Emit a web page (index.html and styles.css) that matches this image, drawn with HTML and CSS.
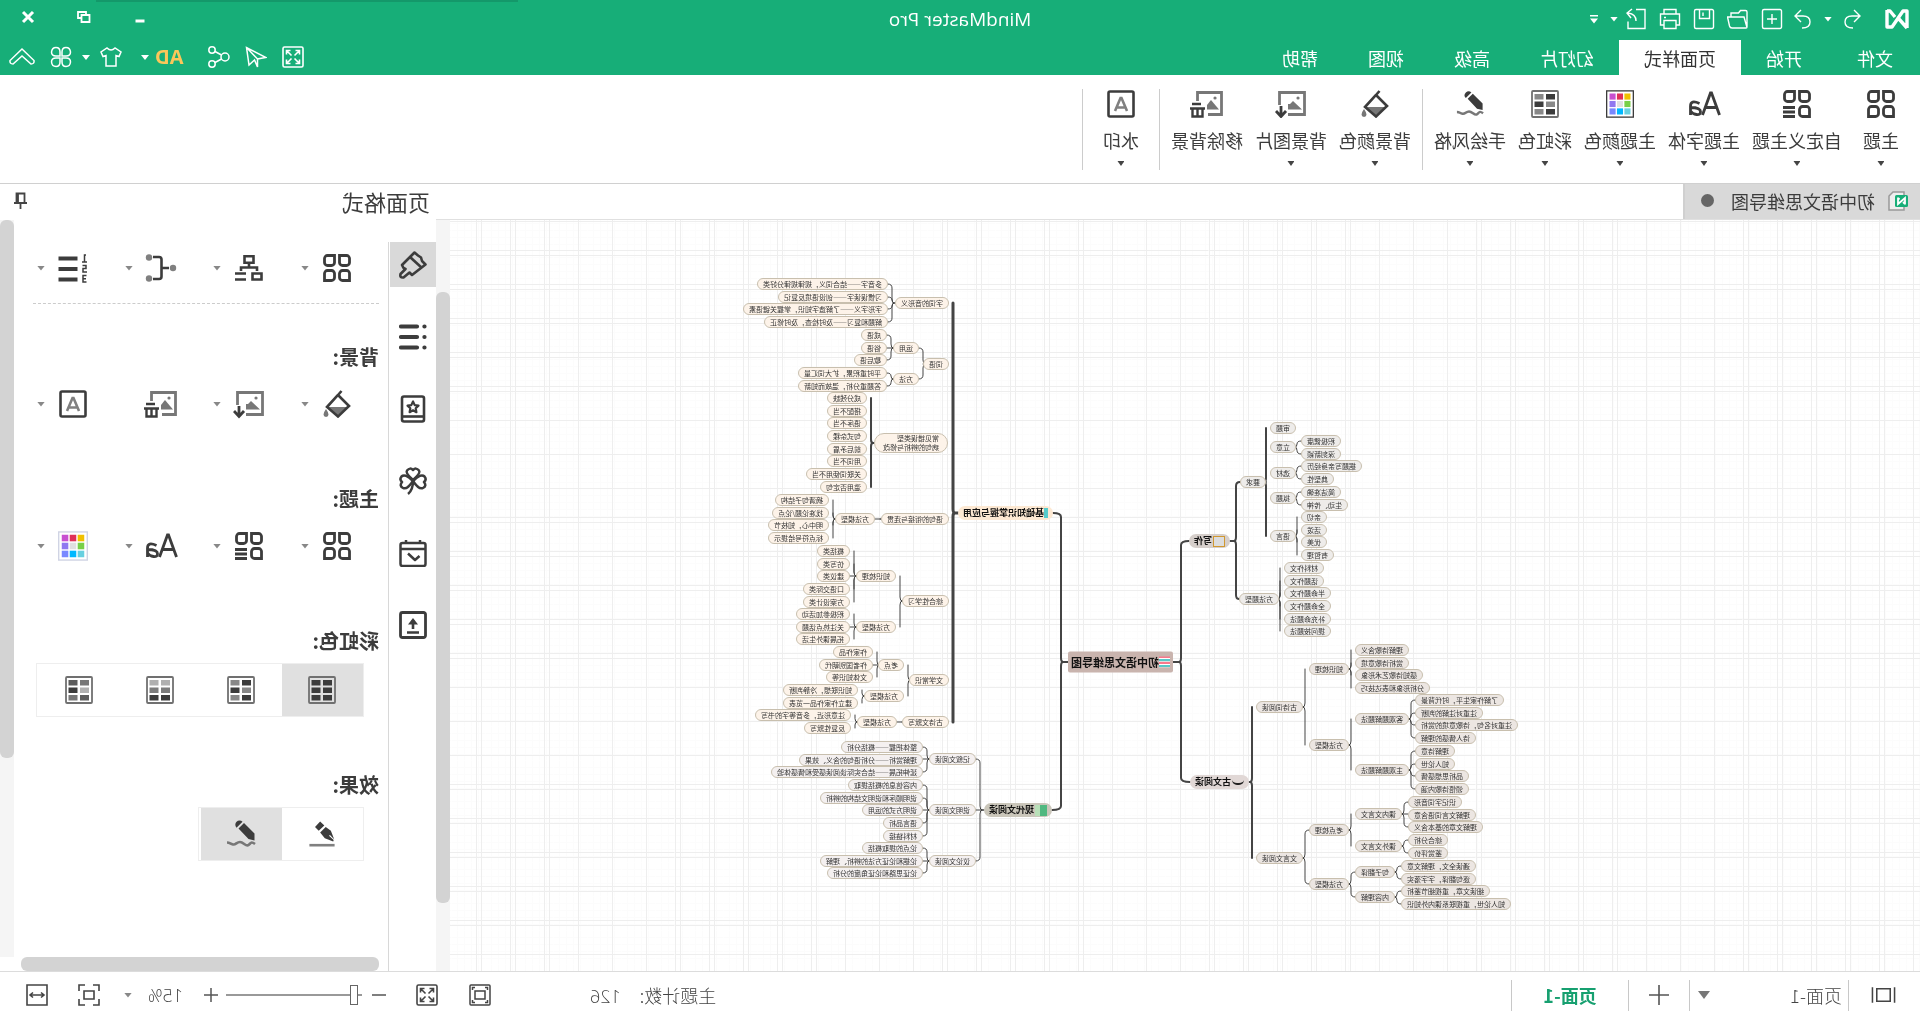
FILE: index.html
```html
<!DOCTYPE html>
<html lang="zh-CN">
<head>
<meta charset="utf-8">
<title>MindMaster Pro</title>
<link rel="stylesheet" href="styles.css">
</head>
<body>
<svg class="sprite" aria-hidden="true">
  <defs>
    <symbol id="theme" viewBox="0 0 28 28"><g fill="none" stroke="currentColor" stroke-width="2.8"><path d="M1.5 4.5a3 3 0 0 1 3-3h7v7a3 3 0 0 1-3 3h-4a3 3 0 0 1-3-3z"/><path d="M16.500 1.500h7a3 3 0 0 1 3 3v4a3 3 0 0 1-3 3h-4a3 3 0 0 1-3-3z"/><path d="M4.500 16.500h4a3 3 0 0 1 3 3v4a3 3 0 0 1-3 3h-7v-7a3 3 0 0 1 3-3z"/><path d="M19.500 16.500h4a3 3 0 0 1 3 3v7h-7a3 3 0 0 1-3-3v-4a3 3 0 0 1 3-3z"/></g></symbol>
    <symbol id="custom" viewBox="0 0 28 28"><g fill="none" stroke="currentColor" stroke-width="2.8"><path d="M1.500 4.500a3 3 0 0 1 3-3h7v7a3 3 0 0 1-3 3h-4a3 3 0 0 1-3-3z"/><path d="M16.500 1.500h7a3 3 0 0 1 3 3v4a3 3 0 0 1-3 3h-4a3 3 0 0 1-3-3z"/><path d="M4.500 16.500h4a3 3 0 0 1 3 3v4a3 3 0 0 1-3 3h-7v-7a3 3 0 0 1 3-3z"/><path d="M16 17.500h12M16 22h12M16 26.500h12"/></g></symbol>
    <symbol id="font" viewBox="0 0 34 28"><g fill="none" stroke="currentColor" stroke-width="2.800"><path d="M1.500 25 9.500 3h1l8 22M4.500 17.500h11"/><path d="M21.500 13.500q9-4 9 2.500v9M30.500 17.500q-10 0-10 4.200 0 3.300 4 2.800 4-.5 6-3.500"/></g></symbol>
    <symbol id="palette" viewBox="0 0 32 32"><rect x=".75" y="1" width="30.500" height="30" fill="#fff" stroke="currentColor" stroke-width="1.500"/><path fill="#f0c000" d="M4 4h7v7H4z"/><path fill="#e03058" d="M12.500 4h7v7h-7z"/><path fill="#c850d0" d="M21 4h7v7h-7z"/><path fill="#78d048" d="M4 12.500h7v7H4z"/><path fill="#e0e0e0" d="M12.500 12.500h7v7h-7z"/><path fill="#9078f0" d="M21 12.500h7v7h-7z"/><path fill="#68d0e0" d="M4 21h7v7H4z"/><path fill="#00b8ff" d="M12.500 21h7v7h-7z"/><path fill="#7888ff" d="M21 21h7v7h-7z"/></symbol>
    <symbol id="rb-all" viewBox="0 0 28 28"><rect x="1" y="1" width="26" height="26" rx="1" fill="none" stroke="#707070" stroke-width="1.800"/><g fill="#3c3c3c"><path d="M4 4h9v5.500H4zM15.500 4h9v5.500h-9zM4 11.500h9V17H4zM15.500 11.500h9V17h-9zM4 19h9v5.500H4zM15.500 19h9v5.500h-9z"/></g></symbol>
    <symbol id="rb-mix" viewBox="0 0 28 28"><rect x="1" y="1" width="26" height="26" rx="1" fill="#fff" stroke="#707070" stroke-width="1.800"/><path fill="#3c3c3c" d="M4 4h9v5.500H4zM15.500 11.500h9V17h-9zM4 19h9v5.500H4z"/><path fill="#888" d="M15.500 4h9v5.500h-9zM4 11.500h9V17H4zM15.500 19h9v5.500h-9z"/></symbol>
    <symbol id="rb-rows" viewBox="0 0 28 28"><rect x="1" y="1" width="26" height="26" rx="1" fill="#fff" stroke="#707070" stroke-width="1.800"/><path fill="#b0b0b0" d="M4 4h9v5.500H4zM15.500 4h9v5.500h-9z"/><path fill="#7c7c7c" d="M4 11.500h9V17H4zM15.500 11.500h9V17h-9z"/><path fill="#3c3c3c" d="M4 19h9v5.500H4zM15.500 19h9v5.500h-9z"/></symbol>
    <symbol id="rb-rand" viewBox="0 0 28 28"><rect x="1" y="1" width="26" height="26" rx="1" fill="#fff" stroke="#707070" stroke-width="1.800"/><path fill="#777" d="M4 4h9v5.500H4zM15.500 19h9v5.500h-9z"/><path fill="#5c5c5c" d="M15.500 4h9v5.500h-9zM4 19h9v5.500H4z"/><path fill="#b0b0b0" d="M4 11.500h9V17H4z"/><path fill="#3c3c3c" d="M15.500 11.500h9V17h-9z"/></symbol>
    <symbol id="pencil" viewBox="0 0 30 30"><path fill="currentColor" d="M1.500 14.500 12 4l5.500 5.500L7.500 20l-6 1.500zM13.500 2.800a4.200 4.200 0 0 1 6 5.900z"/><path d="M1 25c4-3 4-1 6.500 1s5-3 8.500-3 4 3 7 2.500 3-2 6-2" fill="none" stroke="#777" stroke-width="2.600"/></symbol>
    <symbol id="pen" viewBox="0 0 30 30"><path fill="currentColor" d="M17 1.500 22.500 7.500 18.500 11.500 12.500 6zM11 7.500 17 13.500 12 19.500 3 23 2.500 21.500 7.500 17 6.500 16 2 20.500 5.500 11.500z"/><path d="M1.500 27h27" stroke="#808080" stroke-width="2.800"/></symbol>
    <symbol id="bucket" viewBox="0 0 28 28"><path fill="#777" d="M4 17h19l-9 9zM25 19q5 7 0 8-5-1 0-8z"/><path d="M9.500 1 13 5l11 12-11 9.500L2 16 13 5" fill="none" stroke="currentColor" stroke-width="2.600"/></symbol>
    <symbol id="bgimg" viewBox="0 0 32 28"><path d="M19 24.500H2.500v-22h25V15" fill="none" stroke="#777" stroke-width="2.800"/><path fill="#777" d="M5 19.500 14 11l3 3 2 0v5.500z"/><circle cx="9" cy="8" r="1.600" fill="#777"/><path d="M26 16v10M21 21l5 5.500 5-5.500" fill="none" stroke="currentColor" stroke-width="2.800"/></symbol>
    <symbol id="rmimg" viewBox="0 0 34 28"><path d="M16 24.500H2.500v-22h24V11" fill="none" stroke="#777" stroke-width="2.800"/><path fill="#777" d="M5 19.500 13 10l4 5v4.500z"/><circle cx="9" cy="8" r="1.600" fill="#777"/><path d="M23 14h9M19 18.500h15M21.500 19v7.500h10V19M26.500 19v7" fill="none" stroke="currentColor" stroke-width="2.400"/></symbol>
    <symbol id="mark" viewBox="0 0 28 28"><rect x="1.500" y="1.500" width="25" height="25" rx="1.500" fill="none" stroke="currentColor" stroke-width="2.600"/><path d="M8 21 13.500 8h1L20 21M9.500 17.500h9" fill="none" stroke="#808080" stroke-width="2.600"/></symbol>
    <symbol id="layout" viewBox="0 0 28 28"><g fill="none" stroke="currentColor" stroke-width="2.600"><path d="M9.500 2.300h9v6.400h-9zM14 9v4M6 17v-3.500h16V17M1.500 19.500h9v6h-9zM17 19.500h11M17 25.500h11"/></g></symbol>
    <symbol id="branch" viewBox="0 0 32 28"><path d="M8 14h7M24 3h-6q-2.500 0-2.500 2.500v17q0 2.500 2.500 2.500h6" fill="none" stroke="currentColor" stroke-width="2.600"/><g fill="#808080"><circle cx="4" cy="14" r="3.200"/><circle cx="28" cy="3.500" r="3.200"/><circle cx="28" cy="24.500" r="3.200"/></g></symbol>
    <symbol id="number" viewBox="0 0 30 30"><path d="M10.500 5.500h19M10.500 16h19M10.500 26.500h19" stroke="currentColor" stroke-width="4.200"/><path d="M2 2h1.500v7M1 9h5M5.500 12.500H2v3h3v3.500H1M1.500 22.500H5V29H1.500M2 25.800h3" fill="none" stroke="currentColor" stroke-width="1.500"/></symbol>
    <symbol id="brush" viewBox="0 0 28 28"><g fill="none" stroke="currentColor" stroke-width="2.600" stroke-linejoin="round"><path d="M1.500 13.500 5 10l1-3.500 3-2 3.500-3L25 14l-1.500 3-2 1 5 5q1 4-3 3.500l-6-5-2.500 2.500z"/><path d="M5 17 17 6"/></g></symbol>
    <symbol id="list" viewBox="0 0 28 28"><g stroke="currentColor" stroke-width="4.200" stroke-linecap="round"><path d="M2.500 3.500h.1M2.500 14h.1M2.500 24.500h.1M10 3.500h16M10 14h16M10 24.500h16"/></g></symbol>
    <symbol id="book" viewBox="0 0 28 28"><g fill="none" stroke="currentColor" stroke-width="2.600" stroke-linejoin="round"><rect x="3" y="1.500" width="22" height="25" rx="2"/><path d="M4 21.500h20"/><path d="M14 6.500l1.700 3.600 3.800.5-2.800 2.700.7 3.900-3.400-1.900-3.400 1.900.7-3.900-2.800-2.700 3.800-.5z" stroke-width="2.200"/></g></symbol>
    <symbol id="clover" viewBox="0 0 28 28"><g fill="none" stroke="currentColor" stroke-width="2.500" stroke-linejoin="round"><path d="M14 13Q6 6 8 3.500q3-3.500 6-.5 3-3 6 .5Q22 6 14 13z"/><path d="M14 14Q6 6 2.500 9.500q-2.500 3 .5 5.500-3 4 1 6 4 2 10-7z"/><path d="M14 14q8-8 11.500-4.500 2.500 3-.5 5.500 3 4-1 6-4 2-10-7z"/><path d="M14 14q0 9 5 13"/></g></symbol>
    <symbol id="date" viewBox="0 0 28 28"><g fill="none" stroke="currentColor" stroke-width="2.500" stroke-linejoin="round"><rect x="1.500" y="4" width="25" height="23" rx="2"/><path d="M2 10h24M7 1v4M21 1v4M19 14.500 12 21 7.500 17"/></g></symbol>
    <symbol id="upload" viewBox="0 0 28 28"><rect x="1.500" y="1.500" width="25" height="25" rx="2" fill="none" stroke="currentColor" stroke-width="2.800"/><path d="M14 18V9M8 21.500h12" stroke="currentColor" stroke-width="2.600"/><path d="M9 13.500 14 7l5 6.500z" fill="currentColor"/></symbol>
    <symbol id="full" viewBox="0 0 22 22"><g fill="none" stroke="currentColor" stroke-width="1.600"><rect x="1" y="1" width="20" height="20" rx="1.500"/><path d="M4.500 8.500v-4h4M4.500 4.500l5 5M13.500 4.500h4v4M17.500 4.500l-5 5M4.500 13.500v4h4M4.500 17.500l5-5M13.500 17.500h4v-4M17.500 17.500l-5-5"/></g></symbol>
  </defs>
</svg>

<div class="app">
  <header class="top">
    <div class="titlebar">
      <div class="quick">
        <svg class="logo" viewBox="0 0 26 22"><path d="M3 20V3l4 0 11 16h5V2M3 20 11 11M23 3h-3l-5 6" fill="none" stroke="#fff" stroke-width="3.400" stroke-linejoin="round"/></svg>
        <button class="q undo" aria-label="撤销"><svg viewBox="0 0 22 22"><path d="M9 2 3 8l6 6M3 8h8q7 0 7 6 0 6-8 6"/></svg></button>
        <span class="caret w"></span>
        <button class="q redo" aria-label="恢复"><svg viewBox="0 0 22 22"><path d="M13 2l6 6-6 6M19 8h-8q-7 0-7 6 0 6 8 6"/></svg></button>
        <button class="q" aria-label="新建"><svg viewBox="0 0 22 22"><rect x="1.500" y="1.500" width="19" height="19" rx="1.500"/><path d="M11 6v10M6 11h10"/></svg></button>
        <button class="q" aria-label="打开"><svg viewBox="0 0 22 22"><path d="M2 19V4q0-1.500 1.500-1.500h5l2 2.500H18v4M2 19.500 5 9h16.500l-2 9q-.5 2-2.500 2H3q-1 0-1-1z"/></svg></button>
        <button class="q" aria-label="保存"><svg viewBox="0 0 22 22"><rect x="1.500" y="1.500" width="19" height="19" rx="1.500"/><path d="M5.500 2v8.500h10V2M12 4.500v3.500"/></svg></button>
        <button class="q" aria-label="打印"><svg viewBox="0 0 22 22"><path d="M5 6V1.500h12V6M5 17H1.500V6h19v11H17M5 12.500h12v8H5zM15 9.500h2"/></svg></button>
        <button class="q" aria-label="导出"><svg viewBox="0 0 22 22"><path d="M11 1.500H2v19h17v-7M11 13q0-7 8-8M15 1l5 4-4 5"/></svg></button>
        <span class="caret w"></span>
        <span class="caret w bar"></span>
      </div>
      <h1>MindMaster Pro</h1>
      <div class="win">
        <button aria-label="最小化"><svg viewBox="0 0 14 14"><path d="M2.500 11h9" stroke-width="3"/></svg></button>
        <button aria-label="还原"><svg viewBox="0 0 14 14"><path d="M1.500 5h8v7h-8zM5 5V2h8v6h-3" stroke-width="1.800"/></svg></button>
        <button aria-label="关闭"><svg viewBox="0 0 14 14"><path d="M2 2l10 10M12 2 2 12" stroke-width="3"/></svg></button>
      </div>
    </div>
    <div class="tabrow">
      <nav class="tabs">
        <button>文件</button><button>开始</button><button class="on">页面样式</button><button>幻灯片</button><button>高级</button><button>视图</button><button>帮助</button>
      </nav>
      <div class="tools">
        <button aria-label="全屏"><svg class="i22"><use href="#full"/></svg></button>
        <button aria-label="发送"><svg class="i22" viewBox="0 0 22 22"><path d="M20.500 1.500 18 19l-5.500-5-3 7v-8L1 11.500zM20.500 1.500 9.500 13"/></svg></button>
        <button aria-label="分享"><svg class="i22" viewBox="0 0 22 22"><circle cx="5" cy="11" r="4"/><circle cx="18" cy="4" r="3.200"/><circle cx="18" cy="18" r="3.200"/><path d="M8.500 9 15 5.500M8.500 13l6.500 3.500"/></svg></button>
        <button class="ad">AD</button>
        <span class="caret w"></span>
        <button aria-label="皮肤"><svg class="i22" viewBox="0 0 22 22"><path d="M7 2q4 4 8 0l6 4-2 4.500-3-1V20H6V9.500l-3 1L1 6z"/></svg></button>
        <span class="caret w"></span>
        <button aria-label="应用"><svg class="i22" viewBox="0 0 22 22"><path d="M10 10V6q0-4.500-4-4.500T1.500 6q0 4 4.500 4zM12 10V6q0-4.500 4-4.500T20.500 6q0 4-4.500 4zM10 12v4q0 4.500-4 4.500T1.500 16q0-4 4.500-4zM12 12v4q0 4.500 4 4.500t4.500-4.500q0-4-4.500-4z"/></svg></button>
        <button aria-label="收起"><svg class="i26" viewBox="0 0 26 22"><path d="M13 3 25 14.500q.5 3.500-3 3.500l-9-8-9 8q-3.500 0-3-3.500z"/></svg></button>
      </div>
    </div>
  </header>

  <div class="ribbon">
    <button class="rb"><svg class="i28"><use href="#theme"/></svg><span>主题</span><i class="caret d"></i></button>
    <button class="rb"><svg class="i28"><use href="#custom"/></svg><span>自定义主题</span><i class="caret d"></i></button>
    <button class="rb"><svg class="i34"><use href="#font"/></svg><span>主题字体</span><i class="caret d"></i></button>
    <button class="rb"><svg class="i28"><use href="#palette"/></svg><span>主题颜色</span><i class="caret d"></i></button>
    <button class="rb"><svg class="i28"><use href="#rb-mix"/></svg><span>彩虹色</span><i class="caret d"></i></button>
    <button class="rb"><svg class="i28"><use href="#pencil"/></svg><span>手绘风格</span><i class="caret d"></i></button>
    <hr>
    <button class="rb"><svg class="i28"><use href="#bucket"/></svg><span>背景颜色</span><i class="caret d"></i></button>
    <button class="rb"><svg class="i34"><use href="#bgimg"/></svg><span>背景图片</span><i class="caret d"></i></button>
    <button class="rb"><svg class="i34"><use href="#rmimg"/></svg><span>移除背景</span></button>
    <hr>
    <button class="rb"><svg class="i28"><use href="#mark"/></svg><span>水印</span><i class="caret d"></i></button>
    <hr>
  </div>

  <main class="work">
    <section class="doc">
      <div class="doctabs">
        <button class="doctab"><svg class="docicon" viewBox="0 0 22 22"><path d="M5 5V2h11l4 4v14H5v-3" fill="#eee" stroke="#999" stroke-width="1.500"/><rect x="1" y="5" width="13" height="12" rx="1.500" fill="#17ae78"/><path d="M4 14.500V8l7 6V7.500M4 14l2-2M11 8 9.500 9.500" fill="none" stroke="#fff" stroke-width="1.800"/></svg>初中语文思维导图<span class="dot"></span></button>
      </div>
      <div class="canvas">
        <svg class="grid" width="100%" height="100%">
          <defs>
            <pattern id="fine" width="34" height="34" patternUnits="userSpaceOnUse" x="6" y="30"><path d="M7 0v34M14 0v34M21 0v34M28 0v34M0 7h34M0 14h34M0 21h34M0 28h34" stroke="#fcfcfc" transform="translate(.5 .5)"/></pattern>
            <pattern id="major" width="267" height="267" patternUnits="userSpaceOnUse" x="-90" y="30"><path d="M0 0h267M0 5h267M0 34h267M0 39h267M0 68h267M0 73h267M0 102h267M0 107h267M0 136h267M0 141h267M0 170h267M0 204h267M0 238h267M266 0v267M261 0v267M232 0v267M227 0v267M198 0v267M193 0v267M164 0v267M159 0v267M130 0v267M125 0v267M96 0v267M62 0v267M28 0v267" stroke="#eee" transform="translate(.5 .5)"/></pattern>
          </defs>
          <rect width="100%" height="100%" fill="url(#fine)"/>
          <rect width="100%" height="100%" fill="url(#major)"/>
        </svg>
        <div class="map" id="map"></div>
      </div>
    </section>
    <div class="vbar"><div class="docthumb"></div></div>
    <aside class="side">
      <div class="sidehead"><h2>页面格式</h2><svg class="pin" viewBox="0 0 16 18"><path d="M3.500 1.500h8V11h-8zM1 11h13M7.500 11v6M10 2v9" fill="none" stroke="#444" stroke-width="1.800"/></svg></div>
      <div class="sidebody">
        <nav class="rail">
          <button class="on" aria-label="页面格式"><svg class="i28"><use href="#brush"/></svg></button>
          <button aria-label="大纲"><svg class="i28"><use href="#list"/></svg></button>
          <button aria-label="图标"><svg class="i28"><use href="#book"/></svg></button>
          <button aria-label="剪贴画"><svg class="i28"><use href="#clover"/></svg></button>
          <button aria-label="任务"><svg class="i28"><use href="#date"/></svg></button>
          <button aria-label="导出"><svg class="i28"><use href="#upload"/></svg></button>
        </nav>
        <div class="pane">
          <div class="opts">
            <button aria-label="主题"><svg class="i28"><use href="#theme"/></svg><i class="caret"></i></button>
            <button aria-label="布局"><svg class="i28"><use href="#layout"/></svg><i class="caret"></i></button>
            <button aria-label="连接线"><svg class="i32"><use href="#branch"/></svg><i class="caret"></i></button>
            <button aria-label="编号"><svg class="i30"><use href="#number"/></svg><i class="caret"></i></button>
          </div>
          <section>
            <h3>背景:</h3>
            <div class="opts">
              <button aria-label="背景颜色"><svg class="i28"><use href="#bucket"/></svg><i class="caret"></i></button>
              <button aria-label="背景图片"><svg class="i32"><use href="#bgimg"/></svg><i class="caret"></i></button>
              <button aria-label="移除背景"><svg class="i34"><use href="#rmimg"/></svg></button>
              <button aria-label="水印"><svg class="i28"><use href="#mark"/></svg><i class="caret"></i></button>
            </div>
          </section>
          <section>
            <h3>主题:</h3>
            <div class="opts">
              <button aria-label="主题"><svg class="i28"><use href="#theme"/></svg><i class="caret"></i></button>
              <button aria-label="自定义主题"><svg class="i28"><use href="#custom"/></svg><i class="caret"></i></button>
              <button aria-label="主题字体"><svg class="i34"><use href="#font"/></svg><i class="caret"></i></button>
              <button aria-label="主题颜色"><svg class="i32 pale"><use href="#palette"/></svg><i class="caret"></i></button>
            </div>
          </section>
          <section>
            <h3>彩虹色:</h3>
            <div class="seg">
              <label><input type="radio" name="rb" aria-label="单色" checked><svg class="i28"><use href="#rb-all"/></svg></label>
              <label><input type="radio" name="rb" aria-label="彩虹色一"><svg class="i28"><use href="#rb-mix"/></svg></label>
              <label><input type="radio" name="rb" aria-label="彩虹色二"><svg class="i28"><use href="#rb-rows"/></svg></label>
              <label><input type="radio" name="rb" aria-label="彩虹色三"><svg class="i28"><use href="#rb-rand"/></svg></label>
            </div>
          </section>
          <section>
            <h3>效果:</h3>
            <div class="seg">
              <label><input type="radio" name="fx" aria-label="标准"><svg class="i28"><use href="#pen"/></svg></label>
              <label><input type="radio" name="fx" aria-label="手绘" checked><svg class="i30"><use href="#pencil"/></svg></label>
            </div>
          </section>
          <div class="hbar"></div>
        </div>
        <div class="vbar"><div class="sidethumb"></div></div>
      </div>
    </aside>
  </main>

  <footer class="status">
    <button class="view" aria-label="视图"><svg viewBox="0 0 26 16"><path d="M1.500 0v16M24.500 0v16M6 1.500h14v13H6z" fill="none" stroke="#444" stroke-width="1.600"/></svg></button>
    <hr>
    <select class="page" aria-label="页面"><option>页面-1</option></select>
    <span class="caret big"></span>
    <hr>
    <button class="add" aria-label="新建页面"><svg viewBox="0 0 20 20"><path d="M10 0v20M0 10h20" stroke="#555" stroke-width="1.600"/></svg></button>
    <hr>
    <button class="cur">页面-1</button>
    <hr>
    <div class="count">主题计数:<span>126</span></div>
    <button class="s1" aria-label="适应"><svg viewBox="0 0 22 22"><g fill="none" stroke="#444" stroke-width="1.500"><rect x="1" y="1" width="20" height="20" rx="1"/><path d="M6 7h10v8H6zM3.500 6V3.500H6M16 3.500h2.500V6M3.500 16v2.500H6M16 18.500h2.500V16"/></g></svg></button>
    <button class="s2" aria-label="全屏"><svg><use href="#full"/></svg></button>
    <button class="minus" aria-label="缩小"><svg viewBox="0 0 14 20"><path d="M0 10h14" stroke="#555" stroke-width="1.500"/></svg></button>
    <input class="zoom" type="range" min="0" max="100" value="3" aria-label="缩放">
    <button class="plus" aria-label="放大"><svg viewBox="0 0 14 20"><path d="M0 10h14M7 3v14" stroke="#555" stroke-width="1.500"/></svg></button>
    <select class="pct" aria-label="缩放比例"><option>15%</option></select>
    <span class="caret"></span>
    <button class="s3" aria-label="适合页面"><svg viewBox="0 0 22 22"><path d="M1 7V1h6M15 1h6v6M21 15v6h-6M7 21H1v-6M6 7h10v8H6z" fill="none" stroke="#444" stroke-width="1.600"/></svg></button>
    <button class="s4" aria-label="适合宽度"><svg viewBox="0 0 22 22"><path d="M1 1h20v20H1zM4 11h14M7 8.500 4 11l3 2.500M15 8.500 18 11l-3 2.500" fill="none" stroke="#444" stroke-width="1.600"/></svg></button>
  </footer>
</div>
<script src="map.js"></script>
</body>
</html>
```
FILE: styles.css
```css
* { box-sizing: border-box; }
body {
  margin: 0;
  overflow: hidden;
  background: #fff;
  color: #3c3c3c;
  font: 18px/24px "Noto Sans CJK SC", "Noto Sans", sans-serif;
}
button, select { padding: 0; border: 0; background: none; color: inherit; font: inherit; }
h1, h2, h3, hr { margin: 0; }
svg { display: block; flex: none; }
.sprite { position: absolute; width: 0; height: 0; }

/* mirrored workspace: the whole window is flipped left to right */
.app { display: flex; flex-direction: column; height: 100vh; transform: scaleX(-1); }

.i22 { width: 22px; height: 22px; }
.i26 { width: 26px; height: 22px; }
.i28 { width: 28px; height: 28px; }
.i30 { width: 30px; height: 30px; }
.i32 { width: 32px; height: 30px; }
.i34 { width: 34px; height: 28px; }
.caret { flex: none; display: block; width: 8px; height: 5px; background: #888; clip-path: polygon(0 0, 100% 0, 50% 100%); }
.caret.w { background: #fff; }
.caret.d { background: #444; }
.caret.big { width: 12px; height: 8px; background: #777; }
.caret.bar { height: 9px; clip-path: polygon(0 0, 100% 0, 100% 2px, 0 2px, 0 4px, 100% 4px, 50% 100%, 0 4px); }

/* header */
.top { background: #17ae78; color: #fff; }
.titlebar { display: grid; grid-template-columns: 1fr auto 1fr; align-items: center; height: 40px; padding-bottom: 2px; background: linear-gradient(90deg, transparent 0 73%, #14986a 73% 95%, transparent 95%) top / 100% 2px no-repeat; }
.titlebar h1 { font: 400 19px/24px "Open Sans", "Noto Sans", sans-serif; }
.quick { display: flex; align-items: center; gap: 12px; padding-left: 10px; }
.logo { width: 26px; height: 22px; margin-right: 11px; }
.q svg { width: 22px; height: 22px; fill: none; stroke: #fff; stroke-width: 1.4; }
.undo, .redo { margin: 0 -3px 0 -2px; }
.quick .q:nth-last-child(3) { margin-right: -5px; }
.win { display: flex; justify-content: flex-end; gap: 42px; padding: 0 21px 4px 0; }
.win svg { width: 14px; height: 14px; fill: none; stroke: #fff; }
.tabrow { display: flex; justify-content: space-between; align-items: stretch; height: 35px; }
.tabs { display: flex; padding-left: 2px; }
.tabs button { padding: 0 25px; }
.tabs button:first-child { margin-right: 5px; }
.tabs .on { background: #fff; color: #333; }
.tools { display: flex; align-items: center; gap: 15px; padding: 0 9px 2px 0; }
.tools svg { fill: none; stroke: #fff; stroke-width: 1.5; }
.tools .ad { margin-left: 9px; color: #fbc75a; font: 700 20px/24px "Open Sans", sans-serif; }
.tools .caret { margin: 0 -5px -2px; }
.tools .ad + .caret { margin: 0 4px -2px -9px; }

/* ribbon */
.ribbon { display: flex; height: 109px; padding: 14px 6px 0; border-bottom: 1px solid #d0d0d0; }
.rb { display: flex; flex-direction: column; align-items: center; min-width: 66px; height: 84px; padding: 1px 6px 0; }
.rb span { margin: 10px 0 9px; }
.rb .caret { width: 7px; }
.ribbon hr { width: 1px; height: 81px; margin: 0 5px; border: 0; background: #ccc; }

/* document */
.work { display: flex; flex: 1; min-height: 0; }
.doc { display: flex; flex: 1; flex-direction: column; min-width: 0; }
.doctabs { height: 36px; margin-right: -14px; border-bottom: 1px solid #e0e0e0; }
.doctab { display: flex; align-items: center; width: 237px; height: 35px; padding: 0 0 2px 11px; border-right: 2px solid #d0d0d0; background: #d9d9d9; background-clip: padding-box; }
.docicon { width: 22px; height: 22px; margin-right: 12px; }
.dot { width: 13px; height: 13px; margin-left: 17px; border-radius: 50%; background: #666; }
.canvas { position: relative; flex: 1; overflow: hidden; }
.grid { position: absolute; inset: 0; }
.vbar { width: 14px; background: #f5f5f5; }
.doc + .vbar { margin-top: 36px; padding-top: 72px; }
.docthumb { height: 90%; max-height: 613px; border-radius: 6px; background: #d3d3d3; }
.sidethumb { height: 73%; border-radius: 6px; background: #d3d3d3; }

/* mind map */
.map { position: absolute; top: 50px; left: 50%; width: 1470px; height: 650px; margin-left: -735px; }
.map svg { position: absolute; inset: 0; fill: none; stroke: #444; stroke-linecap: round; }
.node { position: absolute; transform: translateY(-50%); padding: 0 5px; border: 1px solid #c8bfae; border-radius: 6px; background: #fdf3e9; color: #333; font-size: 7px; line-height: 10px; white-space: pre; }
.node.two { padding: 0 8px; border-radius: 10px; line-height: 9px; }
.modern .node { background: #f4f0f0; }
.write .node { background: #eeecea; }
.classic .node { background: #ece6e2; }
.map .topic { display: flex; align-items: center; padding: 0 5px; border: 0; border-radius: 7px; color: #111; font-size: 9px; font-weight: 700; line-height: 14px; }
.base .topic { background: #fde9d3; }
.modern .topic { background: #cac6ba; }
.write .topic { background: #d6cfcb; }
.classic .topic { background: #e1d8d6; }
.map .root { padding: 0 3px; border-radius: 2px; background: #c9b4ae; font-size: 11px; line-height: 21px; }
.pic { width: 12px; height: 11px; margin-right: 1px; }
.root .pic { width: 11px; margin: 0; background: repeating-linear-gradient(#f8788c 0 2px, #fff 2px 3px, #58c8c8 3px 5px, #ddd 5px 6px); }
.base .pic { width: 4px; height: 10px; margin-right: 0; background: linear-gradient(90deg, #5cc 40%, #fff 40% 60%, #5cc 60%); }
.modern .pic { background: linear-gradient(90deg, #50b880 55%, #b8e0b8 55%); }
.write .pic { border: 1px solid #d09830; background: #ddd; }
.classic .pic { height: 5px; border-bottom: 2px solid #222; border-radius: 0 0 6px 6px; }

/* side panel */
.side { display: flex; flex-direction: column; width: 436px; }
.sidehead { display: flex; align-items: center; justify-content: space-between; height: 36px; padding: 0 12px 2px 6px; }
.sidehead h2 { font-size: 22px; font-weight: 400; line-height: 28px; }
.pin { width: 16px; height: 18px; }
.sidebody { display: flex; flex: 1; min-height: 0; }
.rail { display: flex; flex-direction: column; gap: 27px; width: 48px; margin-top: 22px; border-right: 1px solid #d8d8d8; }
.rail button { display: grid; place-items: center; width: 46px; height: 45px; }
.rail .on { background: #d9d9d9; }
.pane { position: relative; display: flex; flex: 1; flex-direction: column; padding-left: 9px; overflow: hidden; }
.opts { display: flex; }
.opts button { display: grid; grid-template-columns: 56px 18px; align-items: center; flex: none; width: 88px; height: 36px; padding-left: 14px; }
.opts button > svg { justify-self: center; }
.pane > .opts { padding: 30px 0 17px; margin-right: 19px; border-bottom: 1px dashed #ccc; }
.pane section { height: 142px; }
.pane section:nth-of-type(1) { margin-top: 40px; }
.pane h3 { font-size: 20px; font-weight: 700; line-height: 26px; }
.pane section .opts { margin-top: 16px; }
.pane section:nth-of-type(n+3) { height: 144px; }
.seg { display: inline-flex; margin: 9px 0 0 15px; border: 1px solid #eee; }
.seg label { display: grid; place-items: center; width: 81px; height: 52px; }
.seg label:last-child { margin-right: 2px; }
.seg input { position: absolute; margin: 0; opacity: 0; }
.seg label:has(:checked) { background: #e0e0e0; }
.pale { color: #d0d4e4; }
.hbar { height: 14px; margin: auto 7px 0 0; border-radius: 6px; background: #d3d3d3; }
.side .vbar { margin-bottom: 14px; }

/* status bar */
.status { display: flex; align-items: center; height: 45px; padding: 2px 26px 0 24px; border-top: 1px solid #dcdcdc; color: #444; }
.status hr { width: 1px; height: 31px; border: 0; background: #c8c8c8; }
.view svg { width: 25px; height: 16px; }
.view { margin-right: 22px; }
.page, .pct { appearance: none; font-weight: 300; }
.page { width: 126px; margin: 0 6px; }
.status .big { margin-right: 8px; }
.add { margin: 0 20px; }
.add svg { width: 20px; height: 20px; }
.cur { width: 116px; color: #17a070; font-weight: 700; }
.count { flex: 1; padding-right: 99px; text-align: right; font-weight: 300; }
.count span { margin-left: 19px; font-family: "Open Sans", sans-serif; }
.s1 svg, .s2 svg, .s3 svg, .s4 svg { width: 22px; height: 22px; }
.s2 { margin: 0 30px 0 31px; }
.minus svg, .plus svg { width: 14px; height: 20px; }
.zoom { appearance: none; width: 136px; height: 20px; margin: 0 8px 0 10px; background: linear-gradient(#999, #999) center / 100% 2px no-repeat; }
.zoom::-webkit-slider-thumb { appearance: none; width: 8px; height: 20px; border: 1px solid #666; background: #fff; }
.pct { margin: 0 15px 0 21px; font-family: "Open Sans", sans-serif; }
.s3 { margin: 0 30px 0 24px; }
```
FILE: map.js
```js
// Each topic is [text, inner edge x, centre y, children, options].
const PITCH = 12.67;
const leaves = (x, y, texts) => texts.map((t, i) => [t, x, Math.round(y + i * PITCH)]);

const right = [
  ['基础知识掌握与应用', 867, 243, [
    ['字词的音形义', 971, 33, leaves(1032, 14, ['多音字——结合词义，规律规律分好类', '习惯误读字——创设语境反复记', '字形字义——了解造字知识，掌握关键语素', '解题和复习——及时检查，及时修正']), { arms: 1 }],
    ['词语', 971, 94, [
      ['运用', 1001, 78, leaves(1033, 65, ['成语', '俗语', '歇后语']), { arms: 1 }],
      ['方法', 1001, 109, leaves(1033, 103, ['平时重积累，扩大词汇量', '答题重分析，温故而知新']), { arms: 1 }],
    ], { arms: 1 }],
    ['常见错误类型\n病句的辨析与修改', 972, 173, leaves(1053, 128, ['成分残缺', '搭配不当', '语序不当', '句式杂糅', '前后矛盾', '用词不当', '关联词使用不当', '滥用否定句']), { w: 2 }],
    ['语句的衔接与连贯', 971, 249, [
      ['方法模型', 1045, 249, leaves(1091, 230, ['摘清句子结构', '找准论题/论点', '明中心，知枝节', '标点符号给提示'])],
    ]],
    ['综合性学习', 971, 331, [
      ['知识梳理', 1024, 306, leaves(1070, 281, ['概括类', '仿写类', '建议类', '口语交际类', '方案设计类'])],
      ['方法模型', 1024, 357, leaves(1070, 344, ['积极参加活动', '关注热点话题', '拓展课外生活'])],
    ]],
    ['文学常识', 971, 410, [
      ['考点', 1016, 395, leaves(1047, 382, ['作家作品', '作者国别朝代', '文体知识等'])],
      ['方法模型', 1016, 426, leaves(1062, 420, ['知识联想，冷静判断', '建立作家作品一览表'])],
    ]],
    ['古诗文默写', 971, 452, [
      ['方法模型', 1023, 452, leaves(1069, 445, ['注意形近，多音等字的书写', '反复性默写'])],
    ]],
  ], { cls: 'base', w: 3 }],
  ['现代文阅读', 868, 540, [
    ['记叙文阅读', 944, 489, leaves(997, 477, ['整体把握——概括分析', '理解赏析——分析语句的含义、效果', '延伸拓展——结合实际谈阅读感受和情感体验']), { arms: 1 }],
    ['说明文阅读', 944, 540, leaves(997, 515, ['内容信息的概括提取', '说明顺序和说明文结构的辨析', '说明方式的运用', '语言品析', '材料链接']), { arms: 1 }],
    ['议论文阅读', 944, 591, leaves(997, 578, ['论点的提取概括', '论据和论证方法的辨析、理解', '论证思路和论证角度的分析']), { arms: 1 }],
  ], { cls: 'modern', arms: 1 }],
];

const left = [
  ['写作', 731, 271, [
    ['要求', 680, 212, [
      ['审题', 650, 158],
      ['立意', 650, 177, leaves(619, 171, ['积极健康', '深刻新颖']), { arms: 1 }],
      ['选材', 650, 203, leaves(619, 196, ['据题写亲身经历', '典型性']), { arms: 1 }],
      ['拟题', 650, 228, leaves(619, 222, ['简洁准确', '生动、传神']), { arms: 1 }],
      ['语言', 650, 266, leaves(619, 247, ['亲切', '活泼', '优美', '有哲理'])],
    ], { w: 2 }],
    ['方法题型', 681, 329, leaves(636, 298, ['材料作文', '话题作文', '半命题作文', '全命题作文', '补充命题法', '提问按题法'])],
  ], { cls: 'write', arms: 1, w: 2 }],
  ['古文阅读', 730, 512, [
    ['古诗词阅读', 664, 437, [
      ['知识梳理', 611, 399, leaves(565, 380, ['理解诗歌含义', '赏析诗歌意境', '感知诗歌艺术形象', '分析形象和表达技巧'])],
      ['方法模型', 611, 475, [
        ['客观题解题法', 565, 449, leaves(505, 430, ['了解作家生平，时代背景', '注重对注解的判断', '注重对名句，诗歌意境的赏析', '诗人情感的理解']), { arms: 1 }],
        ['主观题解题法', 565, 500, leaves(505, 481, ['理解诗意', '知人论世', '品析思想感情', '领悟诗歌内涵']), { arms: 1 }],
      ]],
    ]],
    ['文言文阅读', 664, 588, [
      ['考点梳理', 611, 560, [
        ['课内文言文', 565, 544, leaves(512, 532, ['识记字词音形', '理解文言词语含意', '理解文章的基本含义']), { arms: 1 }],
        ['课外文言文', 565, 576, leaves(512, 570, ['综合分析', '鉴赏评价']), { arms: 1 }],
      ]],
      ['方法模型', 611, 614, [
        ['句子翻译', 565, 602, leaves(519, 596, ['通读全文，理解文意', '逐句翻译，字字落实']), { arms: 1 }],
        ['内容理解', 565, 627, leaves(519, 621, ['细读文章，重视细节鉴析', '知人论世，重视联系课内外知识']), { arms: 1 }],
      ], { arms: 1 }],
    ], { arms: 1 }],
  ], { cls: 'classic', w: 2 }],
];

const map = document.getElementById('map');
const WIDTH = 1470;
let paths = '';

function draw(topic, dir, host, main) {
  const [text, x, y, kids = [], opt = {}] = topic;
  const el = document.createElement('div');
  el.className = 'node' + (main ? ' topic' : '') + (text.includes('\n') ? ' two' : '');
  el.textContent = text;
  if (main) el.insertAdjacentHTML('afterbegin', '<span class="pic"></span>');
  el.style.top = y + 'px';
  if (dir > 0) el.style.left = x + 'px';
  else el.style.right = WIDTH - x + 'px';
  host.append(el);
  kids.forEach(k => draw(k, dir, host, false));
  if (kids.length) brace(x + dir * el.offsetWidth, y, kids, dir, opt, 4);
}

function brace(px, py, kids, dir, opt, gap) {
  const sx = kids[0][1] - dir * gap;
  let d = `M${px} ${py}L${sx - dir} ${py}`;
  for (const [, kx, ky] of kids) {
    const s = Math.sign(ky - py);
    if (Math.abs(ky - py) < 2) { d += `M${px} ${py}H${kx}`; continue; }
    const r = Math.min(4, Math.abs(ky - py) / 2);
    d += `M${sx - dir * 2} ${py}Q${sx} ${py} ${sx} ${py + s * r}V${ky - s * r}`;
    d += opt.arms ? `Q${sx} ${ky} ${kx} ${ky}` : `V${ky}`;
  }
  paths += `<path d="${d}" stroke-width="${opt.w || 1}"/>`;
}

function side(list, dir) {
  for (const topic of list) {
    const group = document.createElement('div');
    group.className = topic[4].cls;
    map.append(group);
    draw(topic, dir, group, true);
  }
}

side(right, 1);
side(left, -1);
brace(852, 392, right, 1, { arms: 1, w: 2 }, 8);
brace(748, 392, left, -1, { arms: 1, w: 2 }, 8);

const root = document.createElement('div');
root.className = 'node topic root';
root.innerHTML = '<span class="pic"></span>初中语文思维导图';
root.style.left = '747px';
root.style.top = '392px';
map.append(root);
map.insertAdjacentHTML('afterbegin', `<svg width="${WIDTH}" height="650">${paths}</svg>`);
```
